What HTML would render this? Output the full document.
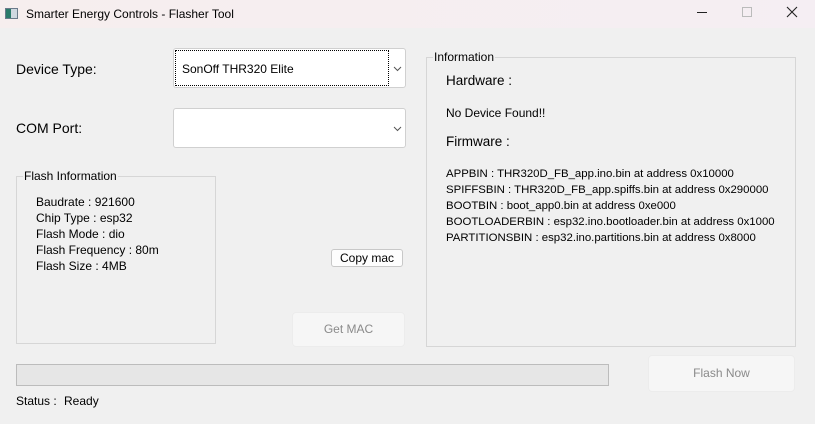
<!DOCTYPE html>
<html><head><style>
*{margin:0;padding:0;box-sizing:border-box}
body{width:815px;height:424px;background:#f0f0f0;font-family:"Liberation Sans",sans-serif;font-size:12px;color:#000;position:relative;overflow:hidden}
.a{position:absolute;white-space:nowrap}
.t{line-height:16px}
</style></head><body>
<div class="a" style="left:0;top:0;width:815px;height:28px;background:linear-gradient(90deg,#f6eeee,#f5eef3)"></div>
<div class="a" style="left:5px;top:8px;width:13px;height:11px;border:1px solid #6a7a8a;background:linear-gradient(90deg,#2a7a6a 0 45%,#cfd8e0 45%)"></div>
<div class="a t" style="left:26px;top:6px;font-size:12px">Smarter Energy Controls - Flasher Tool</div>
<div class="a" style="left:697px;top:12px;width:10px;height:1px;background:#222"></div>
<div class="a" style="left:742px;top:7px;width:10px;height:10px;border:1px solid #bbb"></div>
<svg class="a" style="left:786px;top:6px" width="12" height="12"><path d="M1 1L11 11M11 1L1 11" stroke="#222" stroke-width="1.1"/></svg>

<div class="a" style="left:16px;top:61px;font-size:14px;line-height:16px">Device Type:</div>
<div class="a" style="left:173px;top:48px;width:233px;height:40px;background:#fff;border:1px solid #d0d0d0;border-radius:3px"></div>
<div class="a" style="left:175px;top:50px;width:214px;height:36px;border:1px dotted #000"></div>
<div class="a t" style="left:182px;top:61px">SonOff THR320 Elite</div>
<svg class="a" style="left:393px;top:66px" width="9" height="6"><path d="M1 1L4.5 4.5L8 1" stroke="#555" fill="none"/></svg>

<div class="a" style="left:16px;top:120px;font-size:14px;line-height:16px">COM Port:</div>
<div class="a" style="left:173px;top:108px;width:233px;height:40px;background:#fff;border:1px solid #d0d0d0;border-radius:3px"></div>
<svg class="a" style="left:393px;top:126px" width="9" height="6"><path d="M1 1L4.5 4.5L8 1" stroke="#555" fill="none"/></svg>

<div class="a" style="left:16px;top:176px;width:200px;height:168px;border:1px solid #d6d6d6"></div>
<div class="a t" style="left:23px;top:168px;background:#f0f0f0;padding:0 1px">Flash Information</div>
<div class="a t" style="left:36px;top:194px">Baudrate : 921600<br>Chip Type : esp32<br>Flash Mode : dio<br>Flash Frequency : 80m<br>Flash Size : 4MB</div>

<div class="a t" style="left:331px;top:249px;width:72px;height:18px;background:#fdfdfd;border:1px solid #c8c8c8;border-radius:3px;text-align:center;line-height:16px">Copy mac</div>
<div class="a" style="left:292px;top:312px;width:113px;height:35px;background:#f6f6f6;border:1px solid #ececec;border-radius:4px;text-align:center;line-height:33px;color:#8a8a8a">Get MAC</div>

<div class="a" style="left:426px;top:57px;width:370px;height:290px;border:1px solid #d6d6d6"></div>
<div class="a t" style="left:433px;top:49px;background:#f0f0f0;padding:0 1px">Information</div>
<div class="a" style="left:446px;top:73px;font-size:13.5px;line-height:16px">Hardware :</div>
<div class="a t" style="left:446px;top:105px">No Device Found!!</div>
<div class="a" style="left:446px;top:134px;font-size:13.5px;line-height:16px">Firmware :</div>
<div class="a t" style="left:446px;top:166px;font-size:11.4px">APPBIN : THR320D_FB_app.ino.bin at address 0x10000<br>SPIFFSBIN : THR320D_FB_app.spiffs.bin at address 0x290000<br>BOOTBIN : boot_app0.bin at address 0xe000<br>BOOTLOADERBIN : esp32.ino.bootloader.bin at address 0x1000<br>PARTITIONSBIN : esp32.ino.partitions.bin at address 0x8000</div>

<div class="a" style="left:16px;top:364px;width:593px;height:22px;background:#e6e6e6;border:1px solid #bcbcbc"></div>
<div class="a" style="left:648px;top:355px;width:147px;height:37px;background:#f6f6f6;border:1px solid #ececec;border-radius:4px;text-align:center;line-height:35px;color:#8a8a8a">Flash Now</div>

<div class="a t" style="left:16px;top:393px">Status :</div>
<div class="a t" style="left:64px;top:393px">Ready</div>
</body></html>
